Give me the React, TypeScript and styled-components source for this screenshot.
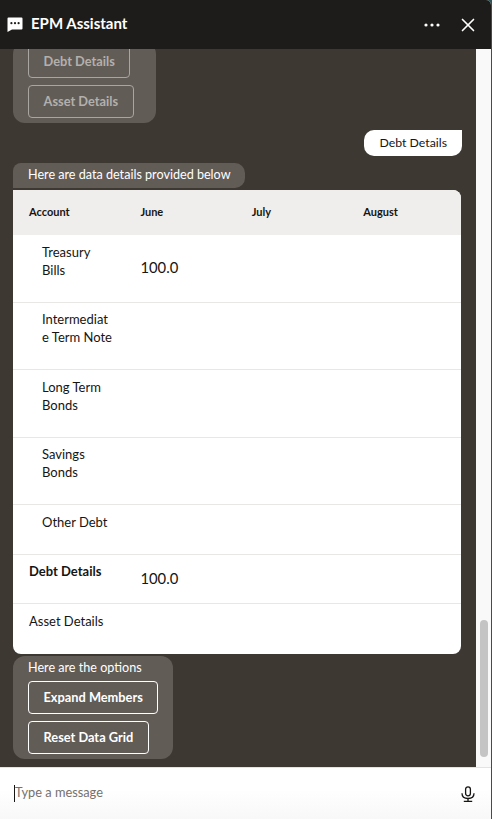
import React from 'react';
import styled, { createGlobalStyle } from 'styled-components';
import { X } from 'lucide-react';

const GlobalStyle = createGlobalStyle`
  html, body, #root {
    margin: 0;
    height: 100%;
    overflow: hidden;
  }
  body {
    background: #2f5558;
    font-family: Lato, "Noto Sans", "Liberation Sans", sans-serif;
  }
`;

const Window = styled.div`
  display: flex;
  flex-direction: column;
  width: 491px;
  height: 819px;
  overflow: hidden;
  border-top-right-radius: 5px;
  background: #fff;
`;

const Header = styled.header`
  flex: none;
  display: flex;
  align-items: center;
  height: 49px;
  padding: 0 12px 0 7px;
  box-sizing: border-box;
  background: #1e1c1a;
  color: #fff;
`;

const Title = styled.h1`
  flex: 1;
  margin: 0 0 3px 8px;
  font-size: 15px;
  font-weight: 700;
  line-height: 20px;
`;

const HeaderActions = styled.div`
  display: flex;
  align-items: center;
  gap: 17px;
`;

const Body = styled.div`
  flex: 1;
  min-height: 0;
  display: flex;
`;

const Messages = styled.main`
  flex: 1;
  min-width: 0;
  display: flex;
  flex-direction: column;
  justify-content: flex-end;
  align-items: flex-start;
  overflow: hidden;
  padding: 0 14px 8px 13px;
  background: #3d3932;
`;

const ScrollTrack = styled.div`
  flex: none;
  width: 15px;
  display: flex;
  flex-direction: column;
  justify-content: flex-end;
  align-items: center;
  padding-bottom: 10px;
  box-sizing: border-box;
  background: #f9f9f9;
`;

const ScrollThumb = styled.div`
  width: 8px;
  height: 137px;
  border-radius: 4px;
  background: #c4c4c4;
`;

const OptionsBubble = styled.section<{ $gap: number; $minWidth?: number }>`
  flex: none;
  display: flex;
  flex-direction: column;
  align-items: flex-start;
  gap: 7px;
  box-sizing: border-box;
  min-width: ${({ $minWidth }) => $minWidth ?? 0}px;
  margin-bottom: ${({ $gap }) => $gap}px;
  padding: 3px 15px 5px 15px;
  border-radius: 12px;
  background: #625c57;
  color: #fff;
  font-size: 12.6px;
  line-height: 18px;
`;

const OptionsLabel = styled.div`
  margin-bottom: -3px;
`;

const OptionButton = styled.button<{ $muted?: boolean }>`
  height: 33px;
  padding: 0 14.5px 2px;
  border: 1px solid ${({ $muted }) => ($muted ? '#a9a6a2' : '#fff')};
  border-radius: 4px;
  background: transparent;
  color: ${({ $muted }) => ($muted ? '#b3b0ac' : '#fff')};
  font-family: inherit;
  font-size: 12.8px;
  font-weight: 700;
  white-space: nowrap;
`;

const UserBubble = styled.div`
  flex: none;
  align-self: flex-end;
  margin-bottom: 7px;
  padding: 4px 15px;
  border-radius: 10px 0 10px 10px;
  background: #fff;
  color: #161513;
  font-size: 12.3px;
  line-height: 18px;
`;

const BotBubble = styled.div`
  flex: none;
  margin-bottom: 2px;
  padding: 3px 14px 4px 15px;
  border-radius: 8px 10px 10px 0;
  background: #625c57;
  color: #fff;
  font-size: 12.6px;
  line-height: 18px;
`;

const Grid = styled.div`
  flex: none;
  width: 448px;
  margin-bottom: 2px;
  overflow: hidden;
  border-radius: 0 8px 8px 8px;
  background: #fff;
  color: #161513;
`;

const GridRow = styled.div`
  display: grid;
  grid-template-columns: repeat(3, 111.4px) 1fr;
  align-items: center;
  border-bottom: 1px solid #e8e7e5;
  &:last-child {
    padding-bottom: 1.5px;
    border-bottom: none;
  }
`;

const HeadRow = styled(GridRow)`
  height: 45px;
  padding-bottom: 2px;
  box-sizing: border-box;
  border-bottom: none;
  background: #efeeec;
`;

const HeadCell = styled.div`
  padding-left: 16px;
  font-size: 11px;
  font-weight: 700;
  line-height: 15px;
`;

const LabelCell = styled.div<{ $child?: boolean; $bold?: boolean }>`
  align-self: start;
  padding: 7.8px 10px 22.7px ${({ $child }) => ($child ? 29 : 16)}px;
  font-size: 13px;
  font-weight: ${({ $bold }) => ($bold ? 700 : 400)};
  line-height: 18px;
  overflow-wrap: anywhere;
`;

const ValueCell = styled.div`
  padding-left: 16px;
  padding-bottom: 2px;
  font-size: 14.8px;
  line-height: 20px;
`;

const Footer = styled.footer`
  flex: none;
  display: flex;
  align-items: center;
  height: 52px;
  padding: 0 16px 0 14px;
  box-sizing: border-box;
  border-top: 1px solid #e4e3e1;
  background: linear-gradient(#fff 40%, #f8f8f8);
`;

const Caret = styled.span`
  width: 1px;
  height: 17px;
  background: #161513;
`;

const Placeholder = styled.span`
  flex: 1;
  padding-bottom: 3px;
  color: #75716c;
  font-size: 12.8px;
  line-height: 18px;
`;

const ChatIcon = () => (
  <svg width="16" height="16" viewBox="0 0 16 16" fill="none">
    <path
      d="M1.5 0.5h13a1 1 0 0 1 1 1v10a1 1 0 0 1-1 1H5L0.5 15V1.5a1 1 0 0 1 1-1z"
      fill="#fff"
    />
    <circle cx="4.4" cy="6.2" r="1.1" fill="#1e1c1a" />
    <circle cx="8" cy="6.2" r="1.1" fill="#1e1c1a" />
    <circle cx="11.6" cy="6.2" r="1.1" fill="#1e1c1a" />
  </svg>
);

const DotsIcon = () => (
  <svg width="16" height="4" viewBox="0 0 16 4" fill="#fff">
    <circle cx="2" cy="2" r="1.6" />
    <circle cx="8" cy="2" r="1.6" />
    <circle cx="14" cy="2" r="1.6" />
  </svg>
);

const MicIcon = () => (
  <svg width="14" height="16" viewBox="0 0 14 16" fill="none" stroke="#161513" strokeWidth="1.3">
    <rect x="4.6" y="0.8" width="4.8" height="9" rx="2.4" />
    <path d="M1 7.2c0 3.4 2.6 5.3 6 5.3s6-1.9 6-5.3" />
    <path d="M7 12.5v2.5M2.8 15.3h8.4" />
  </svg>
);

const rows = [
  { label: 'Treasury Bills', child: true, value: '100.0' },
  { label: 'Intermediate Term Note', child: true },
  { label: 'Long Term Bonds', child: true },
  { label: 'Savings Bonds', child: true },
  { label: 'Other Debt', child: true },
  { label: 'Debt Details', bold: true, value: '100.0' },
  { label: 'Asset Details' },
];

export default function App() {
  return (
    <>
      <GlobalStyle />
      <Window>
        <Header>
          <ChatIcon />
          <Title>EPM Assistant</Title>
          <HeaderActions>
            <DotsIcon />
            <X size={22} color="#fff" strokeWidth={1.8} />
          </HeaderActions>
        </Header>
        <Body>
          <Messages>
            <OptionsBubble $gap={7} $minWidth={143}>
              <OptionButton $muted>Debt Details</OptionButton>
              <OptionButton $muted>Asset Details</OptionButton>
            </OptionsBubble>
            <UserBubble>Debt Details</UserBubble>
            <BotBubble>Here are data details provided below</BotBubble>
            <Grid>
              <HeadRow>
                <HeadCell>Account</HeadCell>
                <HeadCell>June</HeadCell>
                <HeadCell>July</HeadCell>
                <HeadCell>August</HeadCell>
              </HeadRow>
              {rows.map((row) => (
                <GridRow key={row.label}>
                  <LabelCell $child={row.child} $bold={row.bold}>{row.label}</LabelCell>
                  <ValueCell>{row.value}</ValueCell>
                </GridRow>
              ))}
            </Grid>
            <OptionsBubble $gap={0}>
              <OptionsLabel>Here are the options</OptionsLabel>
              <OptionButton>Expand Members</OptionButton>
              <OptionButton>Reset Data Grid</OptionButton>
            </OptionsBubble>
          </Messages>
          <ScrollTrack>
            <ScrollThumb />
          </ScrollTrack>
        </Body>
        <Footer>
          <Caret />
          <Placeholder>Type a message</Placeholder>
          <MicIcon />
        </Footer>
      </Window>
    </>
  );
}
